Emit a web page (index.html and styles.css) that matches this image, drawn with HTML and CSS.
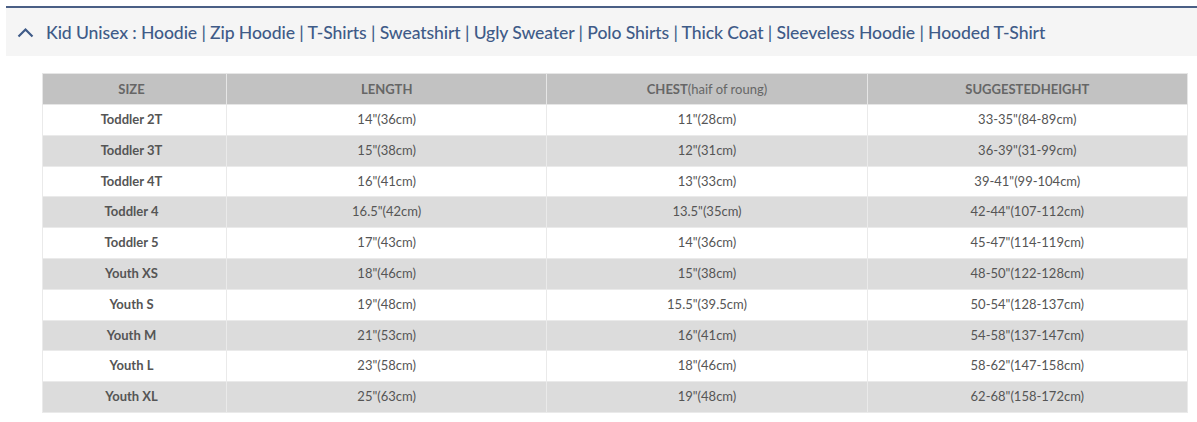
FILE: index.html
```html
<!DOCTYPE html>
<html>
<head>
<meta charset="utf-8">
<link rel="stylesheet" href="styles.css">
</head>
<body>
<div class="page">
  <div class="acc-head">
    <svg class="chev" width="17" height="11" viewBox="0 0 17 11"><path d="M1.5 9.5 L8.5 2.5 L15.5 9.5" fill="none" stroke="currentColor" stroke-width="2.2"/></svg>
    <span class="acc-title">Kid Unisex : Hoodie | Zip Hoodie | T-Shirts | Sweatshirt | Ugly Sweater | Polo Shirts | Thick Coat | Sleeveless Hoodie | Hooded T-Shirt</span>
  </div>
  <div class="acc-body">
    <table class="size-table">
      <colgroup>
        <col class="c1"><col class="c2"><col class="c3"><col class="c4">
      </colgroup>
      <thead>
        <tr><th class="sz">SIZE</th><th>LENGTH</th><th>CHEST<span class="thin">(haif of roung)</span></th><th>SUGGESTEDHEIGHT</th></tr>
      </thead>
      <tbody>
        <tr><td class="sz">Toddler 2T</td><td>14"(36cm)</td><td>11"(28cm)</td><td>33-35"(84-89cm)</td></tr>
        <tr><td class="sz">Toddler 3T</td><td>15"(38cm)</td><td>12"(31cm)</td><td>36-39"(31-99cm)</td></tr>
        <tr><td class="sz">Toddler 4T</td><td>16"(41cm)</td><td>13"(33cm)</td><td>39-41"(99-104cm)</td></tr>
        <tr><td class="sz">Toddler 4</td><td>16.5"(42cm)</td><td>13.5"(35cm)</td><td>42-44"(107-112cm)</td></tr>
        <tr><td class="sz">Toddler 5</td><td>17"(43cm)</td><td>14"(36cm)</td><td>45-47"(114-119cm)</td></tr>
        <tr><td class="sz">Youth XS</td><td>18"(46cm)</td><td>15"(38cm)</td><td>48-50"(122-128cm)</td></tr>
        <tr><td class="sz">Youth S</td><td>19"(48cm)</td><td>15.5"(39.5cm)</td><td>50-54"(128-137cm)</td></tr>
        <tr><td class="sz">Youth M</td><td>21"(53cm)</td><td>16"(41cm)</td><td>54-58"(137-147cm)</td></tr>
        <tr><td class="sz">Youth L</td><td>23"(58cm)</td><td>18"(46cm)</td><td>58-62"(147-158cm)</td></tr>
        <tr><td class="sz">Youth XL</td><td>25"(63cm)</td><td>19"(48cm)</td><td>62-68"(158-172cm)</td></tr>
      </tbody>
    </table>
  </div>
</div>
</body>
</html>
```

FILE: styles.css
```css
html, body {
  margin: 0;
  padding: 0;
  background: #ffffff;
  font-family: Lato, "Open Sans", sans-serif;
}
.page {
  padding: 6px 0 0 6px;
}
.acc-head {
  display: flex;
  align-items: center;
  border-top: 2px solid #4a5f85;
  background: #f5f5f5;
  color: #3f5b88;
  padding-left: 11px;
  box-sizing: border-box;
  height: 50px;
}
.chev {
  display: block;
  margin-right: 12px;
  margin-top: 0;
}
.acc-title {
  font-size: 17.6px;
  font-weight: 500;
  letter-spacing: -0.1px;
  white-space: nowrap;
}
.acc-body {
  padding: 17px 9px 0 36px;
}
.size-table {
  width: 100%;
  border-collapse: collapse;
  table-layout: fixed;
  border: 1px solid #e6e6e6;
  font-size: 13px;
  color: #555555;
}
.c1 { width: 184px; }
.size-table th,
.size-table td {
  text-align: center;
  border: 1px solid #eaeaea;
  padding: 7px 4px;
  line-height: 15.8px;
  white-space: nowrap;
}
.size-table th {
  background: #c2c2c2;
  color: #666666;
  font-weight: 700;
  line-height: 16px;
  border-color: #e6e6e6;
}
.size-table th .thin {
  font-weight: 400;
}
.size-table tbody tr:nth-child(even) td {
  background: #dcdcdc;
}
.size-table .sz {
  padding-right: 10px;
}
.size-table td.sz {
  font-weight: 700;
}
```
